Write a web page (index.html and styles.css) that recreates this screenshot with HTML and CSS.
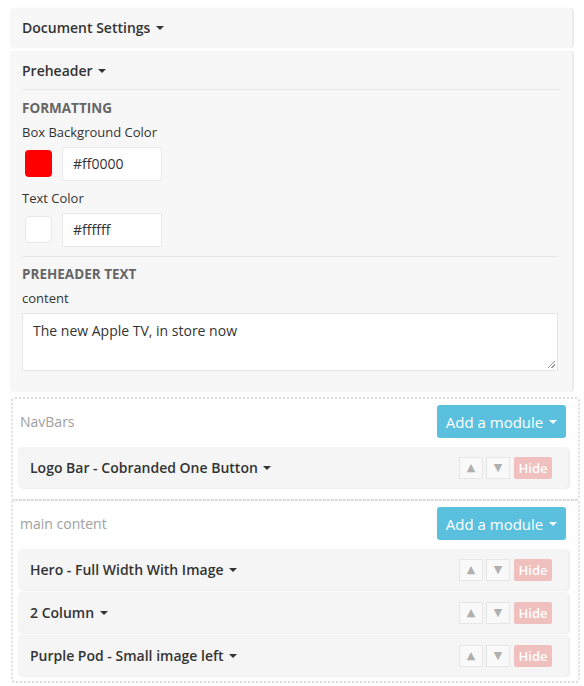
FILE: index.html
```html
<!DOCTYPE html>
<html>
<head>
<meta charset="utf-8">
<link rel="stylesheet" href="styles.css">
</head>
<body>
<div class="page">
  <div class="panel panel-collapsed">
    <div class="panel-title">Document Settings <span class="caret"></span></div>
  </div>

  <div class="panel">
    <div class="panel-title panel-title-open">Preheader <span class="caret"></span></div>
    <div class="panel-body">
      <div class="section-heading">FORMATTING</div>
      <div class="field-label">Box Background Color</div>
      <div class="color-row">
        <span class="swatch swatch-red"></span>
        <div class="text-input">#ff0000</div>
      </div>
      <div class="field-label field-label-spaced">Text Color</div>
      <div class="color-row">
        <span class="swatch swatch-white"></span>
        <div class="text-input">#ffffff</div>
      </div>
      <div class="divider"></div>
      <div class="section-heading">PREHEADER TEXT</div>
      <div class="field-label">content</div>
      <div class="textarea">The new Apple TV, in store now<span class="grip"></span></div>
    </div>
  </div>

  <div class="zone zone-first">
    <div class="zone-header">
      <span class="zone-name">NavBars</span>
      <button class="btn-add">Add a module <span class="caret caret-white"></span></button>
    </div>
    <div class="module">
      <span class="module-name">Logo Bar - Cobranded One Button <span class="caret"></span></span>
      <div class="module-actions">
        <span class="btn-move">&#9650;</span>
        <span class="btn-move">&#9660;</span>
        <span class="btn-hide">Hide</span>
      </div>
    </div>
  </div>

  <div class="zone zone-next">
    <div class="zone-header">
      <span class="zone-name">main content</span>
      <button class="btn-add">Add a module <span class="caret caret-white"></span></button>
    </div>
    <div class="module">
      <span class="module-name">Hero - Full Width With Image <span class="caret"></span></span>
      <div class="module-actions">
        <span class="btn-move">&#9650;</span>
        <span class="btn-move">&#9660;</span>
        <span class="btn-hide">Hide</span>
      </div>
    </div>
    <div class="module">
      <span class="module-name">2 Column <span class="caret"></span></span>
      <div class="module-actions">
        <span class="btn-move">&#9650;</span>
        <span class="btn-move">&#9660;</span>
        <span class="btn-hide">Hide</span>
      </div>
    </div>
    <div class="module">
      <span class="module-name">Purple Pod - Small image left <span class="caret"></span></span>
      <div class="module-actions">
        <span class="btn-move">&#9650;</span>
        <span class="btn-move">&#9660;</span>
        <span class="btn-hide">Hide</span>
      </div>
    </div>
  </div>
</div>
</body>
</html>
```

FILE: styles.css
```css
* { box-sizing: border-box; }
html, body { margin: 0; padding: 0; background: #fff; }
body {
  font-family: "Open Sans", "Liberation Sans", sans-serif;
  color: #333;
  font-size: 13px;
}
.page {
  padding: 8px 0 0 10px;
  width: 582px;
}
.panel {
  width: 562px;
  background: #f7f7f7;
  border-radius: 3px;
  box-shadow: 2px 0 1px rgba(0, 0, 0, 0.08);
  margin-bottom: 3px;
}
.panel-collapsed { height: 40px; }
.panel-title {
  height: 40px;
  line-height: 40px;
  padding: 0 12px;
  font-size: 14px;
  font-weight: 600;
  color: #333;
}
.panel-title-open {
  height: 39px;
  line-height: 39px;
  margin: 0 12px;
  padding: 0;
  border-bottom: 1px solid #e6e6e6;
}
.caret {
  display: inline-block;
  width: 0;
  height: 0;
  border-left: 4px solid transparent;
  border-right: 4px solid transparent;
  border-top: 4px solid #333;
  vertical-align: middle;
  margin-left: 2px;
  margin-top: -2px;
}
.caret-white { border-top-color: #fff; }
.panel-body {
  padding: 8px 14px 21px 12px;
}
.section-heading {
  font-size: 13.5px;
  font-weight: 700;
  color: #666;
  line-height: 20px;
}
.field-label {
  font-size: 13px;
  line-height: 20px;
  margin-top: 4px;
  color: #333;
}
.field-label-spaced { margin-top: 8px; }
.color-row {
  display: flex;
  align-items: center;
  margin-top: 5px;
  height: 33px;
}
.swatch {
  width: 27px;
  height: 27px;
  border-radius: 4px;
  margin-left: 3px;
  margin-right: 10px;
}
.swatch-red { background: #ff0000; }
.swatch-white { background: #fff; border: 1px solid #e8e8e8; }
.text-input {
  width: 100px;
  height: 34px;
  background: #fff;
  border: 1px solid #e8e8e8;
  padding: 0 10px;
  line-height: 32px;
  font-size: 14px;
  color: #333;
}
.divider {
  border-top: 1px solid #e6e6e6;
  margin: 10px 0 7px 0;
}
.textarea {
  position: relative;
  margin-top: 5px;
  height: 58px;
  background: #fff;
  border: 1px solid #e6e6e6;
  padding: 7px 10px;
  font-size: 14px;
  line-height: 20px;
  color: #333;
}
.grip {
  position: absolute;
  right: 2px;
  bottom: 2px;
  width: 7px;
  height: 7px;
  background: linear-gradient(135deg, transparent 45%, #999 45%, #999 55%, transparent 55%, transparent 70%, #999 70%, #999 80%, transparent 80%);
}
.zone {
  width: 569px;
  margin-left: 1px;
  border: 2px dotted #dcdcdc;
  border-radius: 4px;
  padding: 6px 10px 5px 5px;
}
.zone-first {
  margin-top: 5px;
  padding-bottom: 11px;
}
.zone-next { margin-top: -2px; }
.zone-header {
  display: flex;
  align-items: center;
  justify-content: space-between;
  padding: 0 0 0 2px;
  margin-bottom: 9px;
}
.zone-name {
  font-size: 14px;
  color: #a0a0a0;
}
.btn-add {
  width: 129px;
  height: 33px;
  border: none;
  border-radius: 3px;
  background: #5bc0de;
  color: #fff;
  font-family: "Open Sans", "Liberation Sans", sans-serif;
  font-size: 15px;
  padding: 0;
  margin-right: 2px;
}
.module {
  display: flex;
  align-items: center;
  justify-content: space-between;
  height: 41px;
  background: #f5f5f5;
  border-radius: 4px;
  box-shadow: 2px 1px 2px rgba(0, 0, 0, 0.07);
  padding: 0 16px 0 12px;
  margin-bottom: 2px;
}
.module:last-child { margin-bottom: 0; }
.module-name {
  font-size: 14px;
  font-weight: 600;
  color: #333;
}
.module-actions {
  display: flex;
  gap: 3px;
  align-items: center;
}
.btn-move {
  width: 24px;
  height: 22px;
  border: 1px solid #e6e6e6;
  background: #f9f9f9;
  color: #b0b0b0;
  font-size: 11px;
  text-align: center;
  line-height: 20px;
  font-family: "DejaVu Sans", sans-serif;
}
.btn-hide {
  width: 38px;
  height: 22px;
  background: #f0c0bf;
  color: #fff;
  font-size: 13px;
  font-weight: 600;
  text-align: center;
  line-height: 22px;
  border-radius: 2px;
  margin-left: 1px;
}
```
